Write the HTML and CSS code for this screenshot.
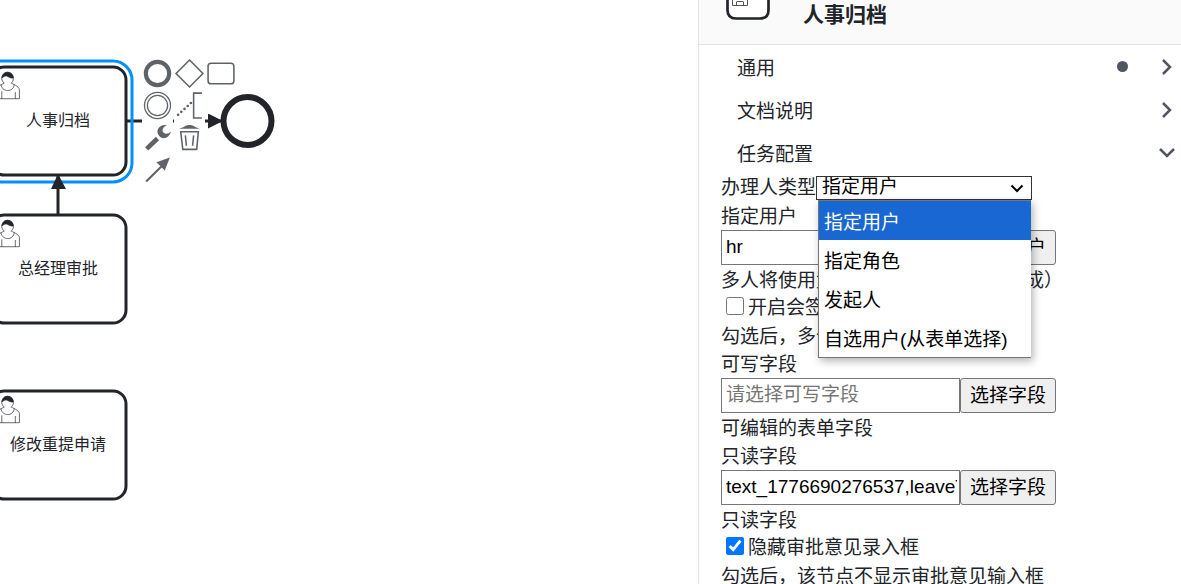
FILE: index.html
```html
<!DOCTYPE html>
<html lang="zh-CN">
<head>
  <meta charset="UTF-8" />
  <meta name="viewport" content="width=device-width, initial-scale=1" />
  <title>流程设计</title>
  <link rel="stylesheet" href="styles.css">
</head>
<body>
  <main class="canvas">
    <svg class="diagram" role="img" aria-label="流程图">
      <defs>
        <marker id="arrow" viewBox="0 0 15 15" refX="15" refY="7.5" markerWidth="15" markerHeight="15" markerUnits="userSpaceOnUse" orient="auto">
          <path d="M0 0 15 7.5 0 15z" fill="#22242a" />
        </marker>
        <g id="user" transform="translate(-9 0) scale(1.35)" stroke="#22242a" stroke-width="0.5">
          <path fill="#fff" d="M15 12c.909-.845 1.594-2.049 1.594-3.385 0-2.554-1.805-4.622-4.357-4.622S7.949 6.061 7.949 8.615c0 1.348.974 2.562 1.896 3.405-.529.187-5.669 2.097-5.794 4.756v6.718h17v-6.718c0-2.298-5.528-4.595-6.051-4.776zM8 18v5.500M18 23.500v-5" />
          <path fill="none" d="M17.162 13.009c0 2.447-2.158 4.431-4.821 4.431-2.665 0-4.822-1.981-4.822-4.431" />
          <path fill="#22242a" d="M8.100 8.200s2.251-2.358 4.274-1.177c2.024 1.181 4.221 1.537 4.124.965-.098-.57-.117-3.791-4.191-4.136-3.575.001-4.208 3.670-4.207 4.348z" />
        </g>
      </defs>

      <path class="flow" d="M127 121H223" marker-end="url(#arrow)" />
      <path class="flow" d="M58 215V175" />

      <rect class="outline" x="-18" y="61" width="150" height="121" rx="19" />
      <rect class="task" x="-9" y="67" width="135" height="108" rx="13" />
      <rect class="task" x="-9" y="215" width="135" height="108" rx="13" />
      <rect class="task" x="-9" y="391" width="135" height="108" rx="13" />
      <path d="M51 189 58 174l8 15z" fill="#22242a" />

      <use href="#user" x="0" y="67" />
      <use href="#user" x="0" y="215" />
      <use href="#user" x="0" y="391" />

      <text x="58" y="126">人事归档</text>
      <text x="58" y="274">总经理审批</text>
      <text x="58" y="450">修改重提申请</text>

      <circle class="end" cx="247.500" cy="121" r="24" />
    </svg>

    <div class="context-pad">
      <div class="pad-row">
        <button type="button" aria-label="结束事件"><svg viewBox="0 0 30 30"><circle cx="15" cy="15" r="11.300" stroke-width="4" /></svg></button>
        <button type="button" aria-label="网关"><svg viewBox="0 0 30 30"><path d="M15 2 28 15 15 28 2 15z" /></svg></button>
        <button type="button" aria-label="任务"><svg viewBox="0 0 30 30"><rect x="2" y="5" width="25" height="20" rx="3" /></svg></button>
      </div>
      <div class="pad-row">
        <button type="button" aria-label="中间事件"><svg viewBox="0 0 30 30"><circle cx="15" cy="15" r="12.600" stroke-width="1.200" /><circle cx="15" cy="15" r="9.800" stroke-width="1.200" /></svg></button>
        <button type="button" aria-label="注释"><svg viewBox="0 0 30 30"><path d="M27 3h-8v24h8" /><path d="M4 24 17 12" stroke-width="2.600" stroke-linecap="round" stroke-dasharray="0 4.200" /></svg></button>
      </div>
      <div class="pad-row">
        <button type="button" aria-label="更改类型"><svg viewBox="0 0 30 30"><path d="M4.500 26 15 16" stroke-width="4.500" /><path class="solid" d="M24.500 3.500c-6-2.500-12 4-8.500 9 3 5 10 4 12-3-3 2.500-7 2.500-8-.5-.5-2.500 1.500-5 4.500-5.500z" /></svg></button>
        <button type="button" aria-label="删除"><svg viewBox="0 0 30 30"><path d="M6.500 9.500h17L22 26.500H8.500z" /><path d="M11 13l1 10M19 13l-1 10" /><path class="solid" d="M5 6.500 10 4.500c3-2 7-2 10 0l5 2z" /></svg></button>
      </div>
      <div class="pad-row">
        <button type="button" aria-label="连线"><svg viewBox="0 0 30 30"><path d="M4 26.500 20 11" stroke-width="2" /><path class="solid" d="M27 3.500 22 16l-8-8z" /></svg></button>
      </div>
    </div>
  </main>

  <aside class="panel">
    <header class="panel-header">
      <svg class="panel-icon" viewBox="0 0 44 20" aria-hidden="true">
        <path d="M1.500-4v14q0 8.500 8.500 8.500h24q8.500 0 8.500-8.500V-4" fill="#fff" stroke="#22242a" stroke-width="2.700" />
        <path d="M6.500-4V5.500h15V-4M10.500 5V1.500M17.500 5V1.500M11 1.500h6" fill="none" stroke="#50535a" />
      </svg>
      <h1>人事归档</h1>
    </header>

    <button type="button" class="group">
      <span>通用</span>
      <span class="dot"></span>
      <svg viewBox="0 0 16 16"><path d="M4 1l7 7-7 7" /></svg>
    </button>
    <button type="button" class="group">
      <span>文档说明</span>
      <svg viewBox="0 0 16 16"><path d="M4 1l7 7-7 7" /></svg>
    </button>
    <button type="button" class="group">
      <span>任务配置</span>
      <svg viewBox="0 0 16 16"><path d="M1 4l7 7 7-7" /></svg>
    </button>

    <form class="form">
      <div class="line">
        <label for="assignee-type">办理人类型</label>
        <div class="select-wrap">
          <select id="assignee-type">
            <option>指定用户</option>
            <option>指定角色</option>
            <option>发起人</option>
            <option>自选用户(从表单选择)</option>
          </select>
          <svg class="caret" viewBox="0 0 14 14" aria-hidden="true"><path d="M1.500 4.500 7 10l5.500-5.500" /></svg>
          <ul class="options">
            <li class="active">指定用户</li>
            <li>指定角色</li>
            <li>发起人</li>
            <li>自选用户(从表单选择)</li>
          </ul>
        </div>
      </div>

      <label class="line" for="users">指定用户</label>
      <div class="field">
        <input type="text" id="users" value="hr">
        <button type="button">选择用户</button>
      </div>
      <p class="line">多人将使用竞签模式（一人通过即完成）</p>

      <div class="line check">
        <input type="checkbox" id="countersign">
        <label for="countersign">开启会签</label>
      </div>
      <p class="line">勾选后，多个用户需全部审批</p>

      <label class="line" for="writable">可写字段</label>
      <div class="field">
        <input type="text" id="writable" placeholder="请选择可写字段">
        <button type="button">选择字段</button>
      </div>
      <p class="line">可编辑的表单字段</p>

      <label class="line" for="readonly">只读字段</label>
      <div class="field">
        <input type="text" id="readonly" value="text_1776690276537,leaveType">
        <button type="button">选择字段</button>
      </div>
      <p class="line">只读字段</p>

      <div class="line check">
        <input type="checkbox" id="hide-comment" checked>
        <label for="hide-comment">隐藏审批意见录入框</label>
      </div>
      <p class="line">勾选后，该节点不显示审批意见输入框</p>
    </form>
  </aside>
</body>
</html>
```

FILE: styles.css
```css
* {
  box-sizing: border-box;
}

body {
  margin: 0;
  height: 100vh;
  display: flex;
  overflow: hidden;
  background: #fff;
  color: #22242a;
  font-family: "Liberation Sans", "Noto Sans CJK SC", sans-serif;
  font-size: 19px;
}

button,
input,
select {
  font: inherit;
}

.canvas {
  flex: 1;
  position: relative;
  min-width: 0;
}

.diagram {
  display: block;
  width: 100%;
  height: 100%;
}

.diagram text {
  font-size: 16px;
  text-anchor: middle;
  fill: #22242a;
}

.task {
  fill: #fff;
  stroke: #22242a;
  stroke-width: 3;
}

.outline {
  fill: none;
  stroke: #0090ff;
  stroke-width: 3;
}

.flow {
  fill: none;
  stroke: #22242a;
  stroke-width: 3;
}

.end {
  fill: #fff;
  stroke: #22242a;
  stroke-width: 6;
}

/* floats over the diagram, beside the selected task */
.context-pad {
  position: absolute;
  left: 142px;
  top: 57px;
}

.pad-row {
  display: flex;
  gap: 1px;
}

.context-pad button {
  width: 31px;
  height: 32px;
  padding: 0;
  border: 0;
  background: #fff;
  cursor: pointer;
}

.context-pad svg {
  display: block;
  width: 31px;
  height: 31px;
  fill: none;
  stroke: #5f6368;
  stroke-width: 1.5;
}

.context-pad .solid {
  fill: #5f6368;
  stroke: none;
}

.panel {
  flex: 0 0 483px;
  border-left: 1px solid #e1e2ea;
  background: #fff;
}

.panel-header {
  display: flex;
  align-items: flex-start;
  gap: 33px;
  height: 45px;
  padding-left: 27px;
  background: #fafafa;
  border-bottom: 1px solid #e1e2ea;
}

.panel-icon {
  width: 44px;
  height: 20px;
}

.panel-header h1 {
  margin: 0;
  font-size: 21px;
  line-height: 30px;
}

.group {
  display: flex;
  align-items: center;
  width: 100%;
  height: 43px;
  padding: 0 6px 0 38px;
  border: 0;
  background: none;
  color: inherit;
  text-align: left;
  cursor: pointer;
}

.group span:first-child {
  flex: 1;
}

.group svg {
  width: 16px;
  height: 16px;
  fill: none;
  stroke: #505562;
  stroke-width: 2.5;
}

.dot {
  width: 11px;
  height: 11px;
  margin-right: 31px;
  border-radius: 50%;
  background: #505562;
}

.form {
  padding-left: 22px;
}

.line {
  display: flex;
  align-items: center;
  height: 28px;
  margin: 0;
  line-height: 30px;
  white-space: nowrap;
}

p.line,
label.line {
  padding-top: 2px;
}

.select-wrap {
  position: relative;
}

select {
  appearance: none;
  display: block;
  width: 216px;
  height: 24px;
  padding: 0 5px 2px;
  border: 1px solid #333;
  border-radius: 0;
  background-color: #fff;
  color: #000;
  line-height: 20px;
}

.caret {
  position: absolute;
  top: 5px;
  right: 8px;
  width: 14px;
  height: 14px;
  fill: none;
  stroke: #000;
  stroke-width: 2;
  pointer-events: none;
}

.options {
  position: absolute;
  top: 24px;
  left: 2px;
  width: 213px;
  margin: 0;
  padding: 0;
  border: 1px solid #767676;
  border-right: 0;
  background: #fff;
  color: #000;
  list-style: none;
  box-shadow: 2px 3px 8px rgba(0, 0, 0, 0.3);
}

.options li {
  height: 39px;
  padding: 2px 0 0 5px;
  line-height: 39px;
}

.options .active {
  background: #1967d2;
  color: #fff;
}

.field {
  display: flex;
  height: 36px;
  padding-bottom: 1px;
}

.field input {
  width: 239px;
  padding: 0 2px 2px 4px;
  border: 1px solid #767676;
  border-radius: 0;
  background: #fff;
  color: #000;
}

.field input::placeholder {
  color: #757575;
}

.field button {
  width: 96px;
  padding: 0 0 4px;
  border: 1px solid #767676;
  border-radius: 3px;
  background: #efefef;
  color: #000;
}

.check input {
  width: 18px;
  height: 18px;
  margin: 0 4px 4px 5px;
}
```
